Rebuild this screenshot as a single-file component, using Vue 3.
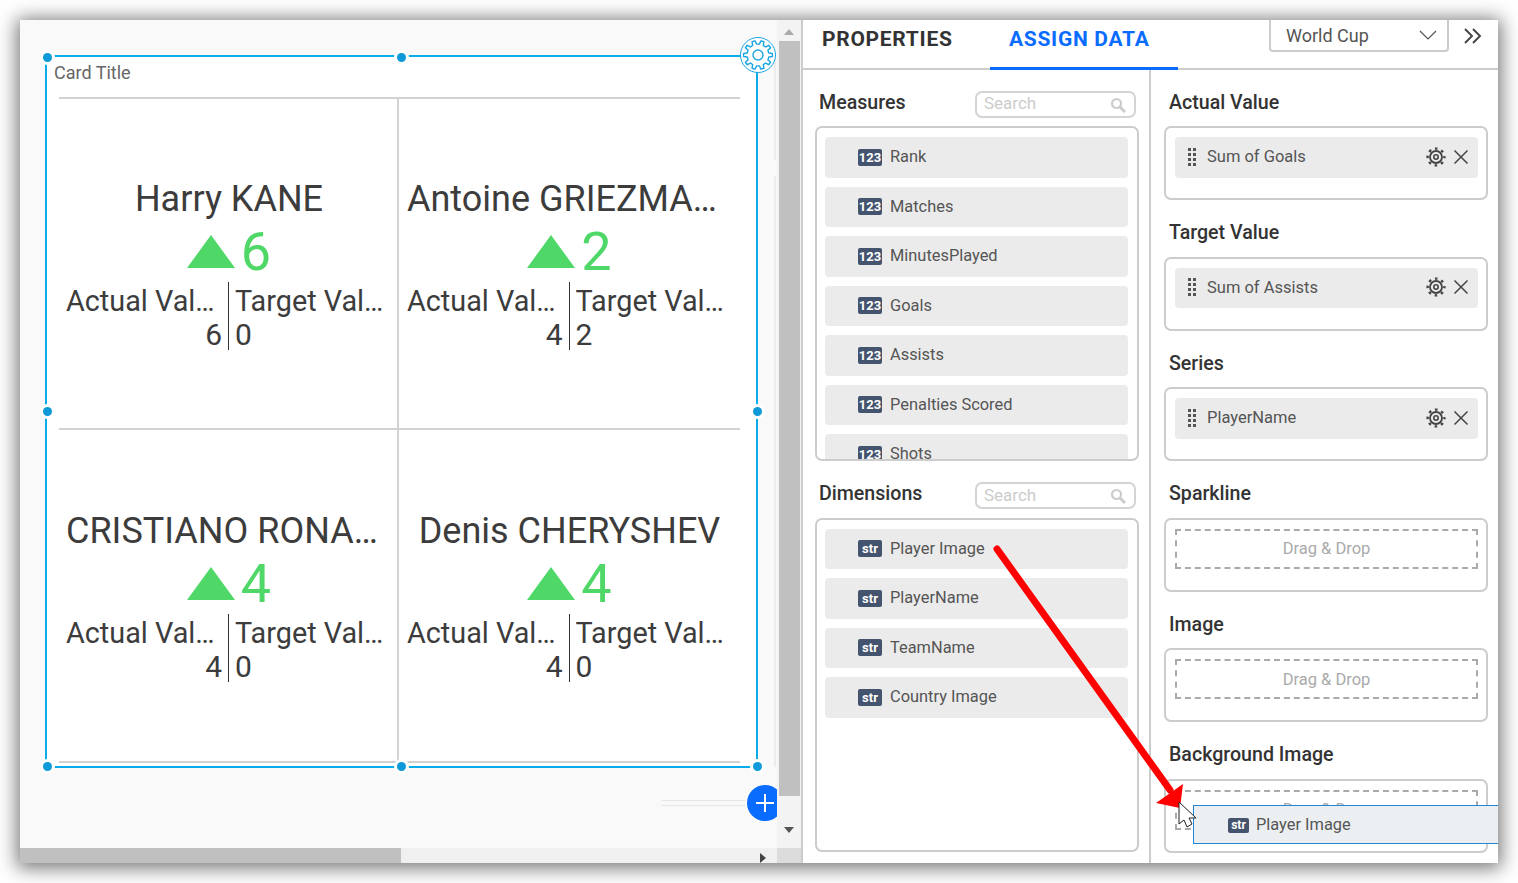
<template>
  <div class="page">
    <div class="window">
      <section class="designer">
        <div class="canvas">
          <div class="guide guide-a"></div>
          <div class="guide guide-b"></div>
          <div class="widget">
            <div class="card-title">Card Title</div>
            <div class="kpi-grid">
              <div v-for="p in players" :key="p.name" class="kpi">
                <div class="kpi-name">{{ p.name }}</div>
                <div class="kpi-diff">
                  <span class="tri"></span>
                  <span class="diff-num">{{ p.actual - p.target }}</span>
                </div>
                <div class="kpi-compare">
                  <div class="col col-left">
                    <div class="col-label">Actual Value</div>
                    <div class="col-value">{{ p.actual }}</div>
                  </div>
                  <div class="col col-right">
                    <div class="col-label">Target Value</div>
                    <div class="col-value">{{ p.target }}</div>
                  </div>
                </div>
              </div>
            </div>
            <span v-for="h in handles" :key="h" class="handle" :class="h"></span>
            <div class="widget-gear">
              <svg width="32" height="32" viewBox="0 0 32 32">
                <path :d="bigGear" fill="none" stroke="#1aa5e3" stroke-width="1.4" stroke-linejoin="round" />
                <circle cx="16" cy="16" r="5" fill="none" stroke="#1aa5e3" stroke-width="1.4" />
              </svg>
            </div>
          </div>
          <div class="add-row">
            <span class="add-lines"></span>
            <span class="add-btn">
              <svg width="18" height="18" viewBox="0 0 18 18"><path d="M9 0v18M0 9h18" stroke="#fff" stroke-width="2" /></svg>
            </span>
          </div>
        </div>
        <div class="vbar">
          <span class="arrow-up"></span>
          <div class="vthumb"></div>
          <span class="arrow-down"></span>
        </div>
        <div class="hbar">
          <div class="hthumb"></div>
          <span class="arrow-right"></span>
        </div>
        <div class="corner"></div>
      </section>

      <section class="panel">
        <header class="tabs">
          <div class="tab">PROPERTIES</div>
          <div class="tab active">ASSIGN DATA</div>
          <div class="dataset">
            <span>World Cup</span>
            <svg width="18" height="10" viewBox="0 0 18 10"><path d="M1 1l8 8 8-8" fill="none" stroke="#555" stroke-width="1.2" /></svg>
          </div>
          <svg class="collapse" width="18" height="16" viewBox="0 0 18 16">
            <path d="M1 1l7 7-7 7M9 1l7 7-7 7" fill="none" stroke="#444" stroke-width="1.9" />
          </svg>
        </header>

        <div class="panel-body">
          <div class="fields">
            <div class="fields-head">
              <span class="heading">Measures</span>
              <div class="search">
                <input placeholder="Search" />
                <svg width="16" height="16" viewBox="0 0 16 16"><circle cx="6.5" cy="6.5" r="4.5" fill="none" stroke="#ccc" stroke-width="2.2" /><path d="M10 10l5 5" stroke="#ccc" stroke-width="3" /></svg>
              </div>
            </div>
            <div class="field-box box-measures">
              <div v-for="m in measures" :key="m" class="field">
                <span class="badge">123</span>{{ m }}
              </div>
            </div>
            <div class="fields-head head-dimensions">
              <span class="heading">Dimensions</span>
              <div class="search">
                <input placeholder="Search" />
                <svg width="16" height="16" viewBox="0 0 16 16"><circle cx="6.5" cy="6.5" r="4.5" fill="none" stroke="#ccc" stroke-width="2.2" /><path d="M10 10l5 5" stroke="#ccc" stroke-width="3" /></svg>
              </div>
            </div>
            <div class="field-box box-dimensions">
              <div v-for="d in dimensions" :key="d" class="field">
                <span class="badge">str</span>{{ d }}
              </div>
            </div>
          </div>

          <div class="slots">
            <div v-for="s in slots" :key="s.label" class="slot">
              <div class="slot-label heading">{{ s.label }}</div>
              <div class="slot-box">
                <div v-if="s.value" class="assigned">
                  <span class="grip"><i v-for="n in 8" :key="n"></i></span>
                  <span class="assigned-text">{{ s.value }}</span>
                  <svg width="22" height="22" viewBox="0 0 22 22">
                    <circle cx="11" cy="11" r="8.4" fill="none" stroke="#444" stroke-width="2.4" stroke-dasharray="2.6 3.99" stroke-dashoffset="1.3" />
                    <circle cx="11" cy="11" r="6" fill="none" stroke="#444" stroke-width="1.8" />
                    <circle cx="11" cy="11" r="2.2" fill="none" stroke="#444" stroke-width="1.6" />
                  </svg>
                  <svg class="remove" width="16" height="16" viewBox="0 0 16 16"><path d="M1.5 1.5l13 13M14.5 1.5l-13 13" stroke="#444" stroke-width="1.5" /></svg>
                </div>
                <div v-else class="dropzone">Drag &amp; Drop</div>
              </div>
            </div>
          </div>
        </div>
      </section>

      <div class="ghost"><span class="badge">str</span>Player Image</div>
      <svg class="annotation" viewBox="20 20 1478 843">
        <path d="M997 549L1170 790" stroke="#f00" stroke-width="7" stroke-linecap="round" />
        <path d="M1156 803L1183 784L1180 808Z" fill="#f00" />
        <path d="M1179 802L1196 818L1189 818L1192 824L1187 827L1184 820L1179 824Z" fill="#fff" stroke="#222" stroke-width="1" stroke-linejoin="round" />
      </svg>
    </div>
  </div>
</template>

<script setup>
const players = [
  { name: 'Harry KANE', actual: 6, target: 0 },
  { name: 'Antoine GRIEZMANN', actual: 4, target: 2 },
  { name: 'CRISTIANO RONALDO', actual: 4, target: 0 },
  { name: 'Denis CHERYSHEV', actual: 4, target: 0 }
]

const measures = ['Rank', 'Matches', 'MinutesPlayed', 'Goals', 'Assists', 'Penalties Scored', 'Shots']
const dimensions = ['Player Image', 'PlayerName', 'TeamName', 'Country Image']

const slots = [
  { label: 'Actual Value', value: 'Sum of Goals' },
  { label: 'Target Value', value: 'Sum of Assists' },
  { label: 'Series', value: 'PlayerName' },
  { label: 'Sparkline' },
  { label: 'Image' },
  { label: 'Background Image' }
]

const handles = ['tl', 'tm', 'ml', 'mr', 'bl', 'bm', 'br']

// cog outline, teeth evenly spaced round the centre
function gear(c, teeth, inner, outer) {
  const step = (Math.PI * 2) / teeth
  const pts = []
  for (let i = 0; i < teeth; i++) {
    const a = i * step
    const spots = [[-0.3, inner], [-0.17, outer], [0.17, outer], [0.3, inner]]
    for (const [k, r] of spots) {
      const t = a + k * step
      pts.push((c + r * Math.cos(t)).toFixed(2) + ' ' + (c + r * Math.sin(t)).toFixed(2))
    }
  }
  return 'M' + pts.join('L') + 'Z'
}

const bigGear = gear(16, 10, 11, 14.5)
</script>

<style>
html, body { margin: 0; background: #fff; }
</style>

<style scoped>
.page {
  height: 883px;
  padding: 20px;
  box-sizing: border-box;
  font-family: Roboto, "Liberation Sans", sans-serif;
  color: #333;
}

.window {
  position: relative;
  display: flex;
  width: 1478px;
  height: 843px;
  overflow: hidden;
  background: #fff;
}
.page::before {
  content: "";
  position: absolute;
  left: 20px; top: 20px;
  width: 1478px; height: 843px;
  box-shadow: 0 2px 18px 3px rgba(0,0,0,0.55);
}

/* designer side */
.designer {
  flex: 0 0 783px;
  box-sizing: border-box;
  border-right: 2px solid #ccc;
  display: grid;
  grid-template-columns: 757px 24px;
  grid-template-rows: 828px 15px;
  background: #f9f9f9;
}

.canvas {
  position: relative;
  overflow: hidden;
  padding: 35px 0 0 25px;
}

.guide { position: absolute; left: 754px; width: 2px; background: #ececec; }
.guide-a { top: 35px; height: 105px; }
.guide-b { top: 156px; height: 591px; }

.widget {
  position: relative;
  width: 713px;
  height: 713px;
  box-sizing: border-box;
  border: 2px solid #0aade9;
  background: #fff;
}

.card-title {
  height: 40px;
  padding: 5px 0 0 7px;
  box-sizing: border-box;
  font-size: 18px;
  line-height: 21px;
  color: #666;
}

.kpi-grid {
  display: grid;
  grid-template-columns: 340px 341px;
  grid-template-rows: 331px 331px;
  margin-left: 12px;
  width: 681px;
  border-top: 2px solid #d2d2d2;
  border-bottom: 2px solid #d2d2d2;
}

.kpi {
  padding: 79px 8px 0;
  box-sizing: border-box;
  min-width: 0;
  border-bottom: 2px solid #d2d2d2;
}
.kpi:nth-child(odd) { border-right: 2px solid #d2d2d2; padding: 79px 5px 0 7px; }
.kpi:nth-child(n+3) { border-bottom: 0; padding-top: 80px; }

.kpi-name {
  font-size: 36px;
  font-weight: 400;
  line-height: 42px;
  text-align: center;
  color: #3c3c3c;
  white-space: nowrap;
  overflow: hidden;
  text-overflow: ellipsis;
}

.kpi-diff {
  display: flex;
  justify-content: center;
  align-items: flex-end;
  gap: 6px;
  height: 62px;
}
.tri {
  width: 0;
  height: 0;
  margin-bottom: 14px;
  border-left: 24.5px solid transparent;
  border-right: 24.5px solid transparent;
  border-bottom: 33px solid #4fd868;
}
.diff-num {
  font-size: 54px;
  font-weight: 400;
  line-height: 60px;
  color: #4fd868;
}

.kpi-compare {
  display: grid;
  grid-template-columns: 1fr 1fr;
  font-size: 30px;
  font-weight: 400;
  color: #3c3c3c;
}
.col { min-width: 0; }
.col-left { text-align: right; padding-right: 6px; border-right: 1px solid #333; }
.col-right { padding-left: 6px; }
.col-label { font-size: 28.8px; line-height: 38px; white-space: nowrap; overflow: hidden; text-overflow: ellipsis; }
.col-value { line-height: 30px; }

.handle {
  position: absolute;
  width: 9px;
  height: 9px;
  margin: -4.5px 0 0 -4.5px;
  border-radius: 50%;
  background: #0e9ad8;
  box-shadow: 0 0 0 3px #fff;
}
.tl { left: 0; top: 0; }
.tm { left: 354px; top: 0; }
.ml { left: 0; top: 354px; }
.mr { left: 710.5px; top: 354px; }
.bl { left: 0; top: 709px; }
.bm { left: 354px; top: 709px; }
.br { left: 710.5px; top: 709px; }

.widget-gear {
  position: absolute;
  right: -20px;
  top: -20px;
  width: 36px;
  height: 36px;
  box-sizing: border-box;
  display: flex;
  align-items: center;
  justify-content: center;
  border: 1.5px solid #1aa5e3;
  border-radius: 50%;
  background: #fff;
}

.add-row {
  position: absolute;
  left: 642px;
  top: 765px;
  display: flex;
  align-items: center;
  width: 130px;
  height: 36px;
}
.add-lines {
  width: 83px;
  height: 4px;
  border-top: 1px solid #e6e6e6;
  border-bottom: 1px solid #e6e6e6;
}
.add-btn {
  margin-left: 2px;
  width: 36px;
  height: 36px;
  flex: none;
  display: flex;
  align-items: center;
  justify-content: center;
  border-radius: 50%;
  background: #0a6cff;
}

.vbar {
  display: flex;
  flex-direction: column;
  align-items: center;
  background: #f3f3f3;
}
.vthumb { width: 21px; height: 755px; margin: 6px 0 0; background: #c0c0c0; }
.arrow-up, .arrow-down {
  width: 0;
  height: 0;
  border-left: 5.5px solid transparent;
  border-right: 5.5px solid transparent;
}
.arrow-up { margin-top: 9px; border-bottom: 6px solid #aaa; }
.arrow-down { margin-top: 31px; border-top: 6px solid #555; }

.hbar {
  position: relative;
  background: #f0f0f0;
}
.hthumb { width: 381px; height: 100%; background: #c0c0c0; }
.arrow-right {
  position: absolute;
  right: 11px;
  top: 5px;
  width: 0;
  height: 0;
  border-top: 5.5px solid transparent;
  border-bottom: 5.5px solid transparent;
  border-left: 6px solid #444;
}
.corner { background: #dcdcdc; }

/* right panel */
.panel {
  flex: 1;
  min-width: 0;
  display: flex;
  flex-direction: column;
}

.tabs {
  display: flex;
  align-items: flex-start;
  height: 50px;
  box-sizing: border-box;
  border-bottom: 2px solid #ccc;
  padding-left: 19px;
  flex: none;
}
.tab {
  width: 130px;
  height: 48px;
  box-sizing: border-box;
  padding-top: 6px;
  font-size: 21px;
  line-height: 26px;
  font-weight: 700;
  letter-spacing: 0.7px;
  white-space: nowrap;
  color: #333;
}
.tab.active {
  width: 188px;
  margin-left: 38px;
  padding: 6px 0 0 19px;
  height: 50px;
  border-bottom: 3px solid #0a6cff;
  color: #0a6cff;
}

.dataset {
  display: flex;
  align-items: center;
  justify-content: space-between;
  width: 180px;
  height: 32px;
  margin-left: 91px;
  padding: 0 10px 0 15px;
  box-sizing: border-box;
  border: 2px solid #ccc;
  border-top: 0;
  border-radius: 0 0 4px 4px;
  font-size: 18px;
  color: #555;
}
.collapse { margin: 8px 0 0 15px; }

.panel-body { display: flex; flex: 1; min-height: 0; }

.heading {
  font-size: 19.6px;
  font-weight: 500;
  line-height: 22px;
  color: #333;
}

.fields {
  flex: 0 0 346px;
  box-sizing: border-box;
  padding-left: 12px;
}
.fields-head {
  display: flex;
  justify-content: space-between;
  align-items: flex-start;
  width: 321px;
  height: 56px;
  padding: 21px 0 0 4px;
  box-sizing: border-box;
}
.fields-head .heading { margin-top: 1px; }

.search {
  display: flex;
  align-items: center;
  width: 161px;
  height: 27px;
  box-sizing: border-box;
  padding: 0 8px 0 7px;
  border: 2px solid #d4d4d4;
  border-radius: 7px;
  background: #fff;
}
.search input {
  flex: 1;
  min-width: 0;
  height: 21px;
  margin-top: -3px;
  border: 0;
  outline: 0;
  padding: 0;
  background: transparent;
  font: 17px Roboto, "Liberation Sans", sans-serif;
}
.head-dimensions .search input { margin-top: -1px; }
.search input::placeholder { color: #ccc; opacity: 1; }

.field-box {
  width: 324px;
  box-sizing: border-box;
  padding: 9px 9px 0 8px;
  border: 2px solid #ccc;
  border-radius: 7px;
  overflow: hidden;
  display: flex;
  flex-direction: column;
  gap: 9px;
}
.box-measures { height: 335px; }
.box-dimensions { height: 334.4px; margin-top: 0.6px; }

.field {
  flex: none;
  display: flex;
  align-items: center;
  height: 40.5px;
  box-sizing: border-box;
  padding: 0 0 1px 33px;
  border-radius: 4px;
  background: #ebebeb;
  font-size: 16.4px;
  color: #555;
}

.badge {
  width: 24px;
  height: 17px;
  margin-top: 1px;
  margin-right: 8px;
  border-radius: 2px;
  background: #44546f;
  color: #fff;
  font-size: 13px;
  font-weight: 700;
  line-height: 17px;
  text-align: center;
  flex: none;
}

.slots {
  flex: 1;
  min-width: 0;
  box-sizing: border-box;
  border-left: 2px solid #ccc;
  padding-left: 13px;
}
.slot { height: 130.5px; }
.slot-label {
  height: 56px;
  box-sizing: border-box;
  padding: 21.9px 0 0 5px;
}
.slot-box {
  width: 324px;
  height: 74px;
  box-sizing: border-box;
  padding: 9px 8px 0 9px;
  border: 2px solid #ccc;
  border-radius: 7px;
}

.assigned {
  display: flex;
  align-items: center;
  height: 40.5px;
  box-sizing: border-box;
  padding: 0 9px 1px 13px;
  border-radius: 4px;
  background: #ebebeb;
  font-size: 16.5px;
  color: #555;
}
.grip {
  display: grid;
  grid-template-columns: 3px 3px;
  gap: 2px;
  margin-right: 11px;
}
.grip i { width: 3px; height: 3px; background: #555; }
.assigned-text { flex: 1; }
.remove { margin-left: 6px; }

.dropzone {
  height: 40px;
  box-sizing: border-box;
  border: 2px dashed #aaa;
  display: flex;
  align-items: center;
  justify-content: center;
  font-size: 16.5px;
  color: #aaa;
}

.ghost {
  position: absolute;
  left: 1173px;
  top: 785px;
  width: 320px;
  height: 39px;
  box-sizing: border-box;
  display: flex;
  align-items: center;
  padding: 0 0 0 34px;
  border: 1px solid #1f87d6;
  background: #eceff2;
  font-size: 16.4px;
  color: #555;
}
.ghost .badge { width: 21px; height: 15px; font-size: 12px; line-height: 15px; margin-right: 7px; }

.annotation {
  position: absolute;
  left: 0;
  top: 0;
  width: 1478px;
  height: 843px;
  pointer-events: none;
}
</style>
